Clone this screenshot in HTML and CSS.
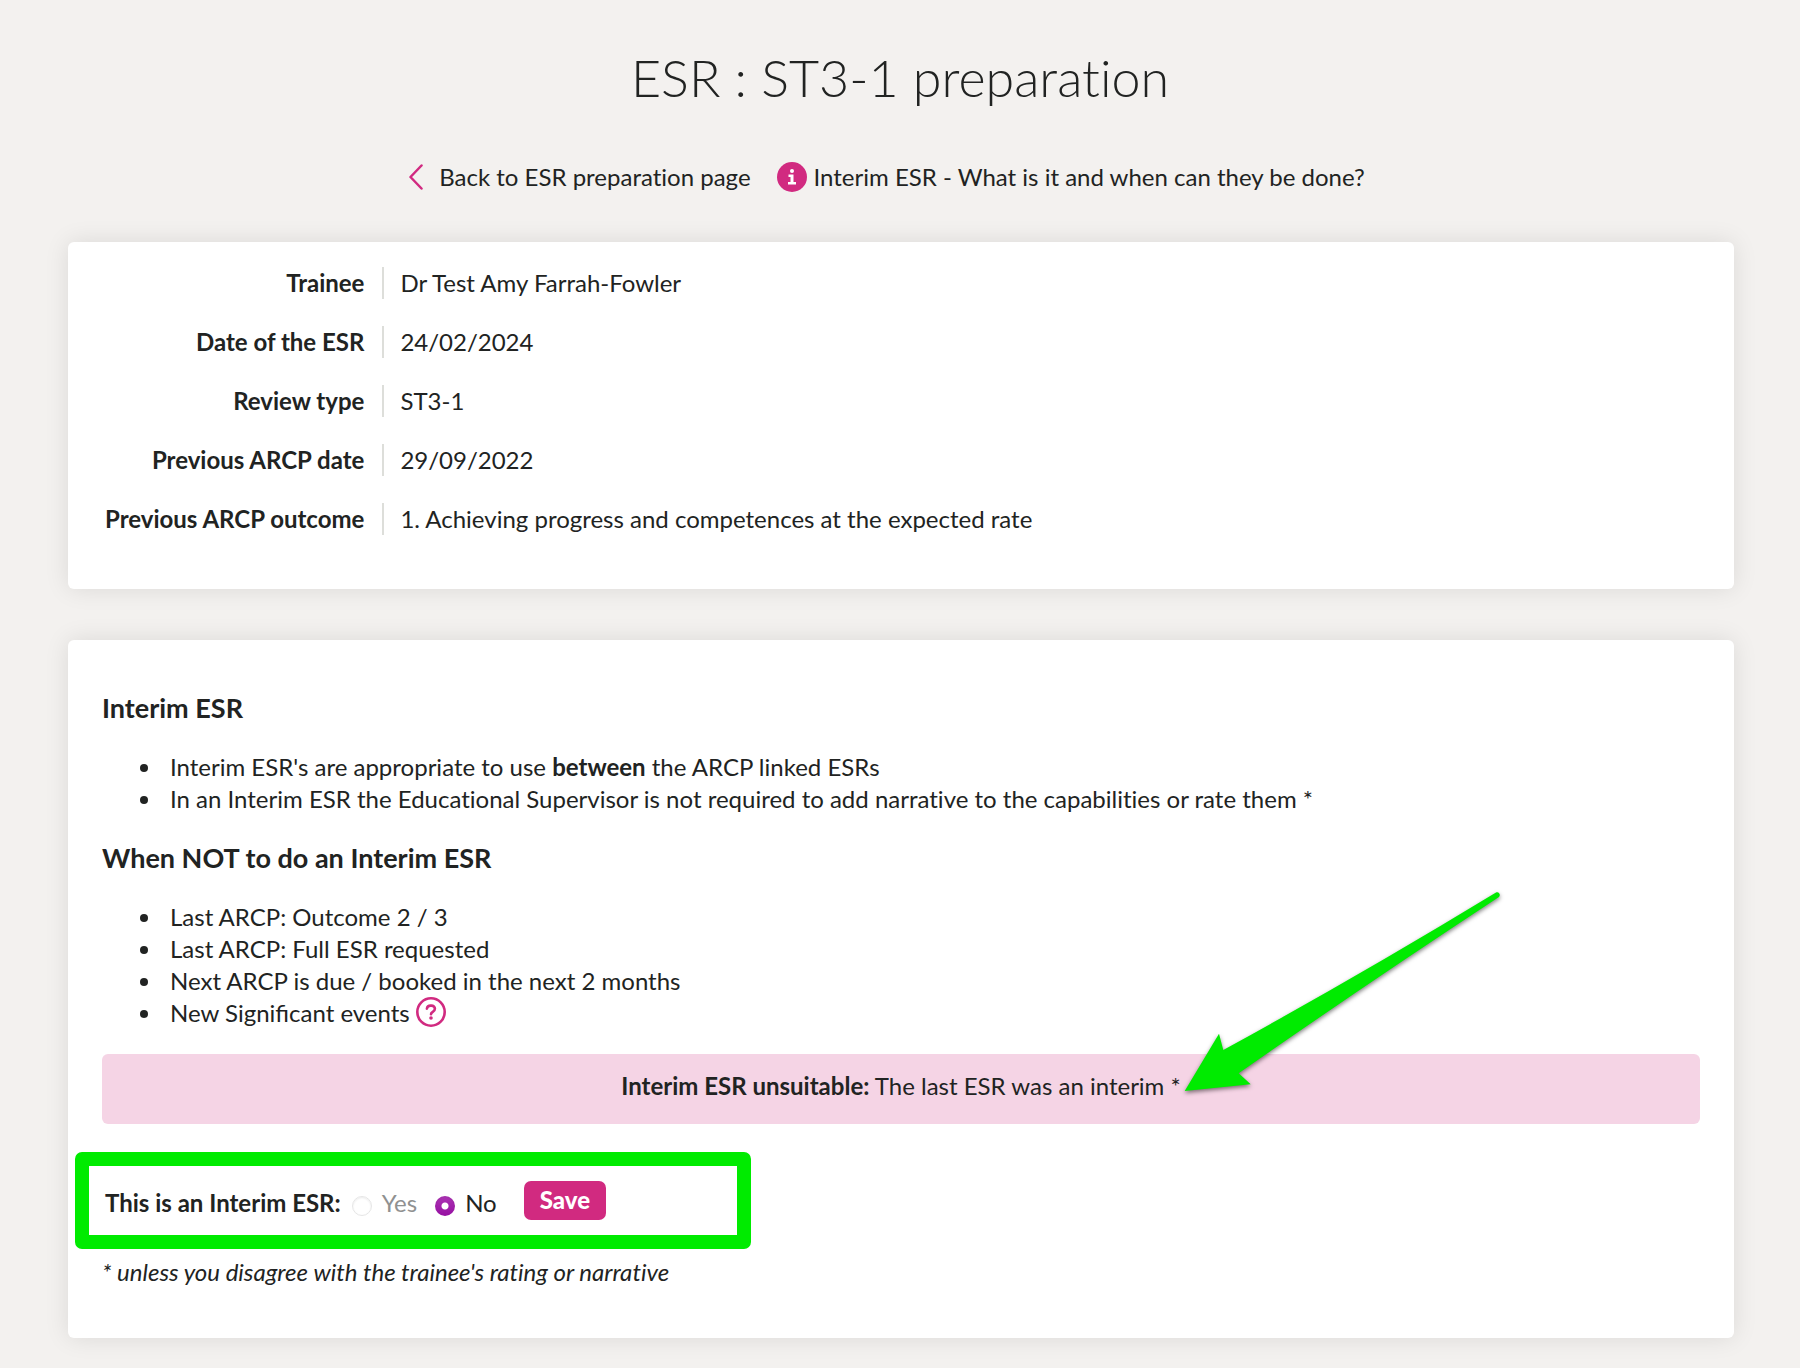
FILE: index.html
```html
<!DOCTYPE html>
<html lang="en">
<head>
<meta charset="utf-8">
<meta name="viewport" content="width=device-width, initial-scale=1">
<title>ESR : ST3-1 preparation</title>
<link rel="stylesheet" href="styles.css">
</head>
<body>
<header class="page-header">
  <h1 class="page-title">ESR : ST3-1 preparation</h1>
  <nav class="page-links">
    <a class="page-link page-link--back" href="#">
      <svg class="chevron" viewBox="0 0 14 26" aria-hidden="true"><path d="M12.500 1.500 1.500 13l11 11.500"/></svg>
      Back to ESR preparation page
    </a>
    <a class="page-link" href="#">
      <svg class="info" viewBox="0 0 30 30" aria-hidden="true"><circle cx="15" cy="15" r="15"/><circle class="info-mark" cx="15" cy="9" r="2"/><path class="info-mark" d="M11.500 12.500h5v7.500h2.500v2.500h-8V20h2.500v-5h-2z"/></svg>
      Interim ESR - What is it and when can they be done?
    </a>
  </nav>
</header>
<main class="content">
  <section class="card card--details">
    <table class="details">
      <tr><th scope="row">Trainee</th><td>Dr Test Amy Farrah-Fowler</td></tr>
      <tr><th scope="row">Date of the ESR</th><td>24/02/2024</td></tr>
      <tr><th scope="row">Review type</th><td>ST3-1</td></tr>
      <tr><th scope="row">Previous ARCP date</th><td>29/09/2022</td></tr>
      <tr><th scope="row">Previous ARCP outcome</th><td>1. Achieving progress and competences at the expected rate</td></tr>
    </table>
  </section>
  <section class="card card--interim">
    <h2 class="heading">Interim ESR</h2>
    <ul class="list">
      <li>Interim ESR's are appropriate to use <strong>between</strong> the ARCP linked ESRs</li>
      <li>In an Interim ESR the Educational Supervisor is not required to add narrative to the capabilities or rate them *</li>
    </ul>
    <h2 class="heading">When NOT to do an Interim ESR</h2>
    <ul class="list">
      <li>Last ARCP: Outcome 2 / 3</li>
      <li>Last ARCP: Full ESR requested</li>
      <li>Next ARCP is due / booked in the next 2 months</li>
      <li class="with-help">New Significant events
        <button class="help" type="button" aria-label="Help"><svg viewBox="0 0 30 30" aria-hidden="true"><circle cx="15" cy="15" r="13.700"/><path d="M10.900 11.600c.3-2 1.700-3 3.700-3h.8c2 0 3.500 1.400 3.500 3.200 0 1.500-.8 2.300-2.100 3.100-1 .6-1.800 1.200-1.800 2.400"/><circle class="help-dot" cx="15" cy="21" r="1.800"/></svg></button>
      </li>
    </ul>
    <div class="alert">
      <strong>Interim ESR unsuitable:</strong> The last ESR was an interim *
      <svg class="arrow" viewBox="40 15 330 215" aria-hidden="true"><path d="M44.700 221 79 163.700 83.300 180Q222 104 356 22.500C359 21 361 25 359 27Q222 117 98.700 203.300L110.700 214.300Z"/></svg>
    </div>
    <form class="interim-form">
      <span class="frame"></span>
      <strong class="question" id="interim-label">This is an Interim ESR:</strong>
      <div class="options" role="radiogroup" aria-labelledby="interim-label">
        <label class="option option--disabled"><input type="radio" name="interim" disabled>Yes</label>
        <label class="option"><input type="radio" name="interim" checked>No</label>
      </div>
      <button class="save" type="submit">Save</button>
    </form>
    <p class="note">* unless you disagree with the trainee's rating or narrative</p>
  </section>
</main>
</body>
</html>
```
FILE: styles.css
```css
* {
  box-sizing: border-box;
}

body {
  margin: 0;
  background: #f3f1ef;
  color: #212322;
  font: 24px/32px Lato, sans-serif;
  font-variant-ligatures: none;
}

.page-header {
  padding: 45px 66px 0;
  text-align: center;
}

.page-title {
  margin: 0;
  font-size: 52px;
  font-weight: 300;
  line-height: 64px;
}

.page-links {
  display: flex;
  flex-wrap: wrap;
  justify-content: center;
  gap: 26px;
  padding: 52px 26px 0 0;
}

.page-link {
  display: flex;
  align-items: center;
  gap: 7px;
  color: inherit;
  text-decoration: none;
}

.page-link--back {
  gap: 16px;
}

.chevron {
  width: 14px;
  height: 26px;
  fill: none;
  stroke: #d12a80;
  stroke-width: 2.500;
  stroke-linecap: round;
  stroke-linejoin: round;
}

.info {
  width: 30px;
  height: 30px;
  fill: #d12a80;
}

.info-mark {
  fill: #fff;
}

.content {
  display: grid;
  gap: 51px;
  padding: 49px 66px 30px 68px;
}

.card {
  min-width: 0;
  border-radius: 6px;
  background: #fff;
  box-shadow: 0 0 24px rgba(0, 0, 0, 0.1);
}

.card--details {
  padding: 25px 37px 27px;
}

.card--interim {
  padding: 50px 34px 50px;
}

.details {
  border-spacing: 0;
}

.details th,
.details td {
  padding: 0 0 27px;
  vertical-align: top;
}

.details th {
  text-align: right;
  padding-right: 18px;
}

.details td::before {
  content: "";
  display: inline-block;
  height: 32px;
  margin-right: 16px;
  border-left: 2px solid #dddeda;
  vertical-align: top;
}

.heading {
  margin: 0;
  font-size: 27px;
  line-height: 36px;
}

.list {
  margin: 25px 0;
  padding-left: 68px;
  list-style: none;
}

.list li::before {
  content: "";
  display: inline-block;
  width: 8px;
  height: 8px;
  margin: 0 22px 0 -30px;
  border-radius: 50%;
  background: #212322;
  vertical-align: 4px;
}

.with-help {
  height: 32px;
  font-variant-ligatures: normal;
}

.help {
  width: 30px;
  height: 30px;
  margin: 0;
  padding: 0;
  border: 0;
  background: none;
  vertical-align: top;
}

.help svg {
  display: block;
  fill: none;
  stroke: #d12a80;
  stroke-width: 2.600;
  stroke-linecap: round;
}

.help .help-dot {
  fill: #d12a80;
  stroke: none;
}

.alert {
  position: relative;
  padding: 16px 16px 22px;
  border-radius: 6px;
  background: #f5d4e5;
  text-align: center;
}

.arrow {
  position: absolute;
  top: -169px;
  left: calc(50% + 279px);
  width: 330px;
  height: 215px;
  fill: #00eb00;
  filter: drop-shadow(0 2px 2px rgba(0, 0, 0, 0.5));
}

.interim-form {
  position: relative;
  display: flex;
  align-items: flex-start;
  margin-top: 28px;
  padding: 29px 3px;
}

.frame {
  position: absolute;
  top: 0;
  bottom: 0;
  left: -27px;
  width: 676px;
  border: 14px solid #00eb00;
  border-radius: 7px;
  pointer-events: none;
}

.question,
.options {
  padding-top: 6px;
}

.options {
  display: flex;
  gap: 18px;
  margin: 0 27px 0 11px;
}

.option {
  display: flex;
  align-items: center;
  gap: 10px;
}

.option--disabled {
  color: #909191;
}

.option input {
  appearance: none;
  width: 20px;
  height: 20px;
  margin: 6px 0 0;
  border: 1px solid #e6e6e6;
  border-radius: 50%;
  background: #fff;
  box-shadow: inset 0 1px 2px rgba(0, 0, 0, 0.08);
}

.option input:checked {
  border: 0;
  background: radial-gradient(circle, #fff 0 3px, transparent 4px), linear-gradient(#ac34b4, #960fa2);
}

.save {
  height: 39px;
  padding: 0 16px 2px;
  border: 0;
  border-radius: 7px;
  background: #d12a80;
  color: #fff;
  font: 900 24px/32px Lato, sans-serif;
}

.note {
  margin: 7px 0 0;
  font-style: italic;
}
```
